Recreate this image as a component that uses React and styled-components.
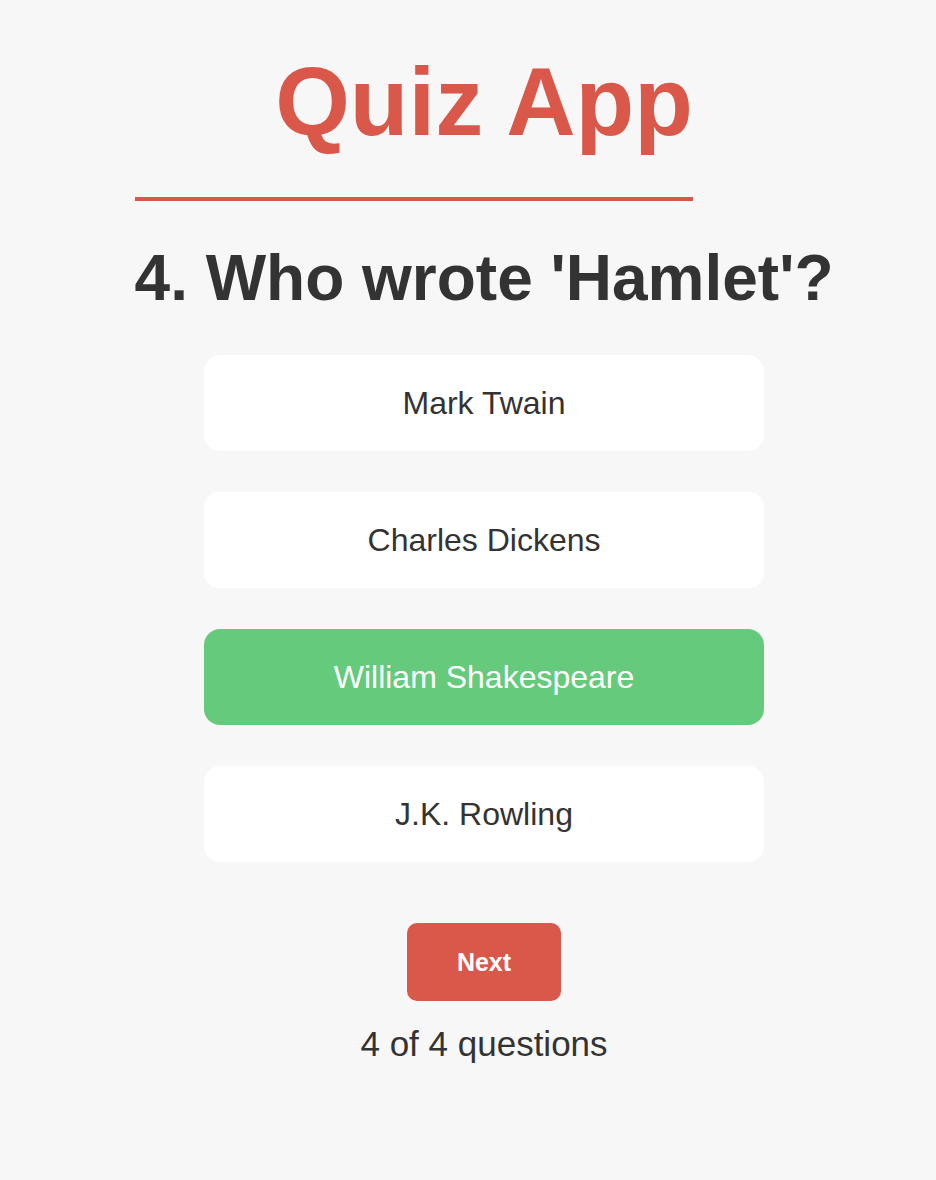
import React, { useState } from 'react';
import styled, { createGlobalStyle } from 'styled-components';

const GlobalStyle = createGlobalStyle`
  html, body {
    margin: 0;
    padding: 0;
    background: #f7f7f7;
    font-family: "Liberation Sans", Arial, Helvetica, sans-serif;
    color: #333;
  }
`;

const Wrapper = styled.div`
  min-height: 1180px;
  box-sizing: border-box;
  padding: 47px 103px 0 135px;
  display: flex;
  flex-direction: column;
  align-items: center;
`;

const Title = styled.h1`
  margin: 0;
  font-size: 96px;
  line-height: 110px;
  font-weight: 700;
  color: #d9584a;
  text-align: center;
`;

const Divider = styled.hr`
  align-self: flex-start;
  width: 80%;
  height: 4px;
  margin: 40px 0 0;
  border: none;
  background: #d9584a;
`;

const Question = styled.h2`
  margin: 40px 0 0;
  font-size: 64px;
  line-height: 74px;
  font-weight: 700;
  color: #333;
  text-align: center;
  white-space: nowrap;
`;

const Options = styled.div`
  margin-top: 40px;
  display: flex;
  flex-direction: column;
  gap: 41px;
  width: 560px;
`;

const Option = styled.button`
  height: 96px;
  border: none;
  border-radius: 16px;
  background: ${p => (p.$correct ? '#66ca7d' : '#fff')};
  color: ${p => (p.$correct ? '#fff' : '#333')};
  font-family: inherit;
  font-size: 32px;
  cursor: pointer;
  padding: 0;
`;

const NextButton = styled.button`
  margin-top: 61px;
  width: 154px;
  height: 78px;
  border: none;
  border-radius: 10px;
  background: #d9584a;
  color: #fff;
  font-family: inherit;
  font-size: 25px;
  font-weight: 700;
  cursor: pointer;
`;

const Progress = styled.p`
  margin: 23px 0 0;
  font-size: 35px;
  line-height: 40px;
  color: #333;
`;

const answers = ['Mark Twain', 'Charles Dickens', 'William Shakespeare', 'J.K. Rowling'];

const App = () => {
  const [picked] = useState(2);
  return (
    <>
      <GlobalStyle />
      <Wrapper>
        <Title>Quiz App</Title>
        <Divider />
        <Question>4. Who wrote 'Hamlet'?</Question>
        <Options>
          {answers.map((a, i) => (
            <Option key={a} $correct={i === picked}>{a}</Option>
          ))}
        </Options>
        <NextButton>Next</NextButton>
        <Progress>4 of 4 questions</Progress>
      </Wrapper>
    </>
  );
};

export default App;
